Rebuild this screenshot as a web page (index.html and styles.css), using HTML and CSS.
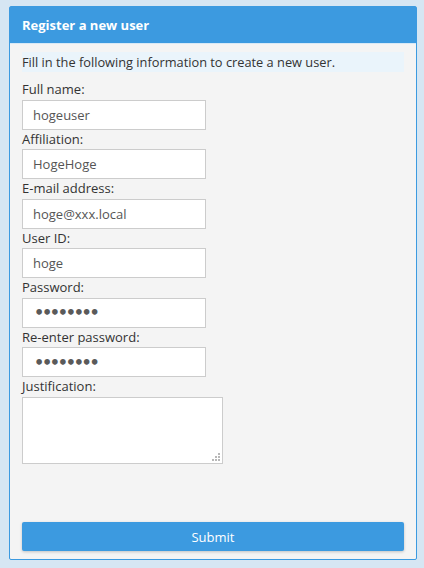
FILE: index.html
```html
<!DOCTYPE html>
<html>
<head>
<meta charset="utf-8">
<link rel="stylesheet" href="styles.css">
</head>
<body>
<div class="panel">
  <div class="panel-header">Register a new user</div>
  <div class="panel-body">
    <div class="info">Fill in the following information to create a new user.</div>
    <form class="form" autocomplete="off">
      <label class="field"><span class="label">Full name:</span><input class="input" type="text" value="hogeuser"></label>
      <label class="field"><span class="label">Affiliation:</span><input class="input" type="text" value="HogeHoge"></label>
      <label class="field"><span class="label">E-mail address:</span><input class="input" type="text" value="hoge@xxx.local"></label>
      <label class="field"><span class="label">User ID:</span><input class="input" type="text" value="hoge"></label>
      <label class="field"><span class="label">Password:</span><input class="input pw" type="text" value="••••••••"></label>
      <label class="field"><span class="label">Re-enter password:</span><input class="input pw" type="text" value="••••••••"></label>
      <label class="field"><span class="label">Justification:</span>
        <span class="textarea-wrap"><textarea class="textarea"></textarea>
          <svg class="grip" width="8" height="8" viewBox="0 0 8 8"><g fill="#b8b8b8"><rect x="6" y="0" width="2" height="2"/><rect x="3" y="3" width="2" height="2"/><rect x="6" y="3" width="2" height="2"/><rect x="0" y="6" width="2" height="2"/><rect x="3" y="6" width="2" height="2"/><rect x="6" y="6" width="2" height="2"/></g></svg>
        </span>
      </label>
    </form>
    <button class="submit" type="button">Submit</button>
  </div>
</div>
</body>
</html>
```
FILE: styles.css
```css
html, body {
  margin: 0;
  padding: 0;
}
body {
  background: #d6e6f3;
  font-family: "Open Sans", "Noto Sans", sans-serif;
  font-size: 13px;
  color: #333;
  padding: 6px 7px 8px 9px;
  box-sizing: border-box;
  height: 568px;
}
.panel {
  width: 408px;
  height: 554px;
  box-sizing: border-box;
  border: 1px solid #3c9ae0;
  border-radius: 2px;
  background: #f4f4f4;
  display: flex;
  flex-direction: column;
}
.panel-header {
  background: #3c9ae0;
  color: #fff;
  font-weight: bold;
  height: 36px;
  line-height: 36px;
  padding-left: 12px;
  font-size: 13px;
  border-bottom: 1px solid #d8e9f6;
}
.panel-body {
  flex: 1;
  display: flex;
  flex-direction: column;
  padding: 8px 12px 8px 12px;
}
.info {
  background: #eaf4fb;
  height: 20px;
  line-height: 20px;
  font-size: 12.8px;
}
.form {
  display: flex;
  flex-direction: column;
  margin-top: 8px;
}
.field {
  display: flex;
  flex-direction: column;
  align-items: flex-start;
}
.label {
  height: 19.5px;
  line-height: 19px;
  color: #333;
}
.input {
  width: 184px;
  height: 30px;
  box-sizing: border-box;
  border: 1px solid #ccc;
  background: #fff;
  padding: 0 10px;
  font-family: "Open Sans", "Noto Sans", sans-serif;
  font-size: 13px;
  color: #555;
  margin: 0;
}
.pw {
  padding-left: 11px;
  font-family: "DejaVu Sans", sans-serif;
  font-size: 16px;
  font-weight: bold;
  letter-spacing: -2.3px;
  color: #5a5a5a;
}
.textarea-wrap {
  position: relative;
  display: block;
  width: 201px;
  height: 67px;
}
.textarea {
  display: block;
  width: 201px;
  height: 67px;
  box-sizing: border-box;
  border: 1px solid #ccc;
  background: #fff;
  margin: 0;
  resize: none;
  font-family: "Open Sans", "Noto Sans", sans-serif;
}
.grip {
  position: absolute;
  right: 3px;
  bottom: 3px;
}
.submit {
  margin-top: auto;
  height: 29px;
  background: #3c9ae0;
  color: #fff;
  border: none;
  border-radius: 2px;
  font-family: "Open Sans", "Noto Sans", sans-serif;
  font-size: 13px;
  box-shadow: 0 1px 3px rgba(0,0,0,0.2);
  margin-bottom: 0;
}
```
